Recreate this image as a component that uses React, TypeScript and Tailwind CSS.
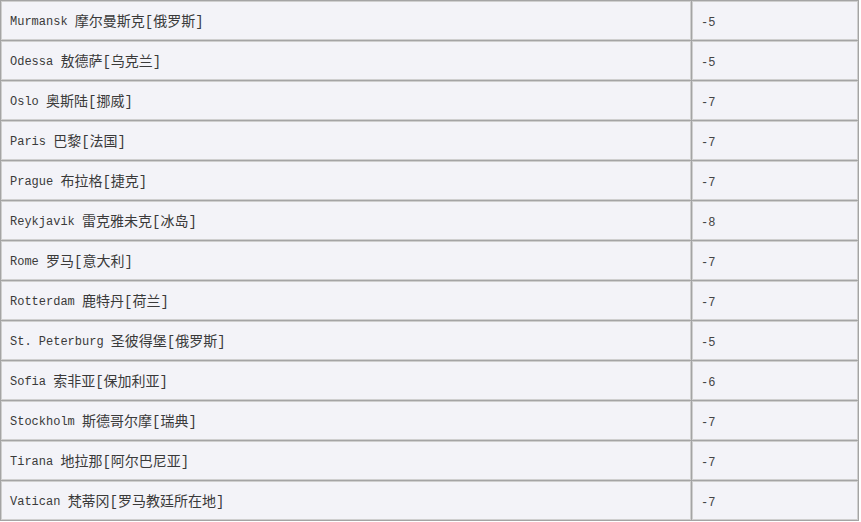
import React from 'react';

interface Zone {
  city: string;
  cn: string;
  offset: string;
}

const zones: Zone[] = [
  { city: "Murmansk", cn: "摩尔曼斯克[俄罗斯]", offset: "-5" },
  { city: "Odessa", cn: "敖德萨[乌克兰]", offset: "-5" },
  { city: "Oslo", cn: "奥斯陆[挪威]", offset: "-7" },
  { city: "Paris", cn: "巴黎[法国]", offset: "-7" },
  { city: "Prague", cn: "布拉格[捷克]", offset: "-7" },
  { city: "Reykjavik", cn: "雷克雅未克[冰岛]", offset: "-8" },
  { city: "Rome", cn: "罗马[意大利]", offset: "-7" },
  { city: "Rotterdam", cn: "鹿特丹[荷兰]", offset: "-7" },
  { city: "St. Peterburg", cn: "圣彼得堡[俄罗斯]", offset: "-5" },
  { city: "Sofia", cn: "索非亚[保加利亚]", offset: "-6" },
  { city: "Stockholm", cn: "斯德哥尔摩[瑞典]", offset: "-7" },
  { city: "Tirana", cn: "地拉那[阿尔巴尼亚]", offset: "-7" },
  { city: "Vatican", cn: "梵蒂冈[罗马教廷所在地]", offset: "-7" },
];

export default function App() {
  return (
    <div className="w-[861px] h-[522px] bg-white overflow-hidden">
      <div
        className="w-[859px] bg-[#a4a4a4] p-px grid grid-cols-[690px_1fr] gap-px text-[#3a3a3a]"
        style={{ fontFamily: '"Liberation Mono", "Noto Sans CJK SC", monospace' }}
      >
        {zones.map((z) => (
          <React.Fragment key={z.city}>
            <div className="h-[39px] border border-[#cfcfcf] bg-[#f3f3f8] flex items-center pl-[8px] pt-[3px] whitespace-nowrap">
              <span className="text-[12px]">{z.city}</span>
              <span className="text-[12px]">&nbsp;</span>
              <span className="text-[14px]">{z.cn}</span>
            </div>
            <div className="h-[39px] border border-[#cfcfcf] bg-[#f3f3f8] flex items-center pl-[8px] pt-[4px]">
              <span className="text-[12px] text-[#444]">{z.offset}</span>
            </div>
          </React.Fragment>
        ))}
      </div>
    </div>
  );
}
